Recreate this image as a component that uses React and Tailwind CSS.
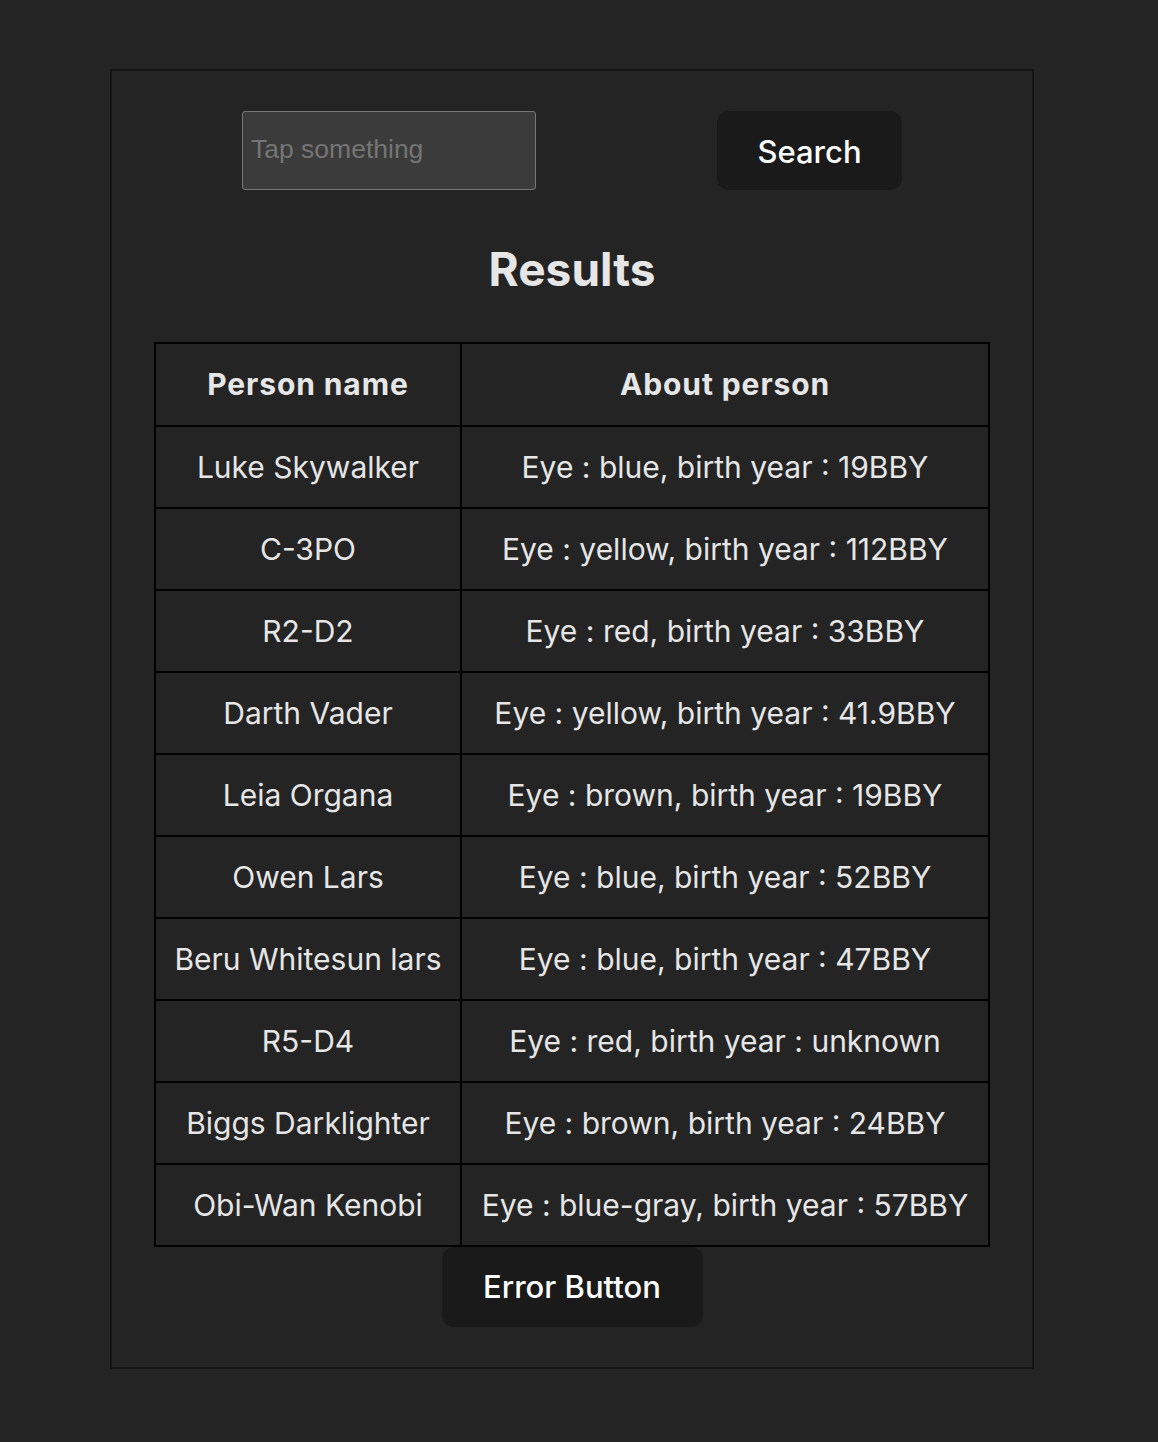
import React, { useState } from 'react';

const people = [
  { name: 'Luke Skywalker', eye: 'blue', year: '19BBY' },
  { name: 'C-3PO', eye: 'yellow', year: '112BBY' },
  { name: 'R2-D2', eye: 'red', year: '33BBY' },
  { name: 'Darth Vader', eye: 'yellow', year: '41.9BBY' },
  { name: 'Leia Organa', eye: 'brown', year: '19BBY' },
  { name: 'Owen Lars', eye: 'blue', year: '52BBY' },
  { name: 'Beru Whitesun lars', eye: 'blue', year: '47BBY' },
  { name: 'R5-D4', eye: 'red', year: 'unknown' },
  { name: 'Biggs Darklighter', eye: 'brown', year: '24BBY' },
  { name: 'Obi-Wan Kenobi', eye: 'blue-gray', year: '57BBY' },
];

const App = () => {
  const [query, setQuery] = useState('');

  return (
    <div className="min-h-screen bg-[#242424] pt-[69px] pl-[110px] pb-[74px]" style={{ fontFamily: 'Inter, "Noto Sans", sans-serif' }}>
      <div className="w-[924px] h-[1300px] border-2 border-[#141414] flex flex-col items-center">
        {/* search bar */}
        <div className="w-full flex items-center pl-[130px] mt-[40px]">
          <input
            value={query}
            onChange={(e) => setQuery(e.target.value)}
            placeholder="Tap something"
            className="w-[294px] h-[79px] bg-[#3b3b3b] border border-[#767676] rounded-[3px] px-2 pb-[2px] text-[26.5px] text-white placeholder:text-[#757575] outline-none"
            style={{ fontFamily: '"Liberation Sans", Arial, sans-serif' }}
          />
          <button className="ml-[181px] w-[185px] h-[79px] pt-[3px] bg-[#1a1a1a] rounded-[12px] text-white text-[31px] font-medium">
            Search
          </button>
        </div>

        <h2 className="mt-[49px] text-[46px] leading-[60px] font-bold text-[#e6e6e6]">Results</h2>

        {/* results table */}
        <table className="mt-[43px] w-[836px] border-collapse border-2 border-black text-[30px] text-[#e6e6e6] text-center">
          <thead>
            <tr className="h-[83px]">
              <th className="w-[306px] border-2 border-black font-bold tracking-[0.03em]">Person name</th>
              <th className="border-2 border-black font-bold tracking-[0.03em]">About person</th>
            </tr>
          </thead>
          <tbody>
            {people.map((p) => (
              <tr key={p.name} className="h-[82px]">
                <td className="border-2 border-black">{p.name}</td>
                <td className="border-2 border-black">Eye : {p.eye}, birth year : {p.year}</td>
              </tr>
            ))}
          </tbody>
        </table>

        <button className="w-[261px] h-[80px] bg-[#1a1a1a] rounded-[12px] text-white text-[31px] font-medium">
          Error Button
        </button>
      </div>
    </div>
  );
};

export default App;
